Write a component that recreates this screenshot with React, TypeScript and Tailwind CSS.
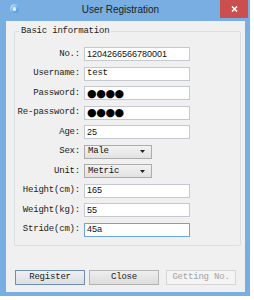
import React from 'react';

const mono = { fontFamily: '"Liberation Mono", "DejaVu Sans Mono", monospace' };

const rows: { label: string; value: string; kind: 'text' | 'mono' | 'pass' | 'select' | 'focus' }[] = [
  { label: 'No.:', value: '1204266566780001', kind: 'text' },
  { label: 'Username:', value: 'test', kind: 'mono' },
  { label: 'Password:', value: '●●●●', kind: 'pass' },
  { label: 'Re-password:', value: '●●●●', kind: 'pass' },
  { label: 'Age:', value: '25', kind: 'text' },
  { label: 'Sex:', value: 'Male', kind: 'select' },
  { label: 'Unit:', value: 'Metric', kind: 'select' },
  { label: 'Height(cm):', value: '165', kind: 'text' },
  { label: 'Weight(kg):', value: '55', kind: 'text' },
  { label: 'Stride(cm):', value: '45a', kind: 'focus' },
];

const Field = ({ value, kind }: { value: string; kind: string }) => {
  if (kind === 'select') {
    return (
      <div className="w-[68px] h-[14px] flex items-center justify-between border border-[#acacac] bg-gradient-to-b from-[#f2f2f2] to-[#e2e2e2] pl-[3px] pr-[6px]">
        <span className="text-[9px] leading-none tracking-[-0.2px] text-[#111]" style={mono}>{value}</span>
        <svg width="5" height="3" viewBox="0 0 5 3"><path d="M0 0h5L2.5 3z" fill="#222" /></svg>
      </div>
    );
  }
  const border = kind === 'focus' ? 'border-[#6aa5dc]' : 'border-[#c5c9cf]';
  return (
    <div className={`w-[106px] h-[14px] flex items-center border ${border} bg-white pl-[2px]`}>
      {kind === 'pass' ? (
        <span className="text-[11px] leading-none tracking-[-0.4px] text-black" style={{ fontFamily: '"DejaVu Sans", sans-serif' }}>{value}</span>
      ) : kind === 'mono' ? (
        <span className="text-[9px] leading-none tracking-[-0.2px] text-[#111]" style={mono}>{value}</span>
      ) : (
        <span className="text-[9px] leading-none text-[#111]" style={{ fontFamily: '"Liberation Sans", Arial, sans-serif' }}>{value}</span>
      )}
    </div>
  );
};

export default function App() {
  return (
    <div className="w-[254px] h-[300px] bg-white">
      <div className="w-[250px] h-[296px] bg-[#78aee1] flex flex-col">
        <div className="h-[21px] flex items-start">
          <div className="ml-[10px] mt-[4px] w-[9px] h-[9px] rounded-full bg-gradient-to-br from-[#bfe4ff] to-[#3b8fd6] flex items-center justify-center">
            <div className="w-[3px] h-[4px] bg-white/80 rounded-sm" />
          </div>
          <div className="flex-1 pl-[2px] pt-[4px] text-center text-[10px] leading-[12px] text-[#222]" style={{ fontFamily: '"Liberation Sans", Arial, sans-serif' }}>
            User Registration
          </div>
          <div className="w-[28px] h-[18px] mr-[2px] bg-[#c9504f] flex items-center justify-center">
            <svg width="7" height="6" viewBox="0 0 7 6"><path d="M1 0.5L6 5.5M6 0.5L1 5.5" stroke="#fff" strokeWidth="1.6" /></svg>
          </div>
        </div>
        <div className="ml-[6px] mr-[5px] h-[271px] bg-[#f0f0f0] flex flex-col" style={mono}>
          <div className="relative mt-[10px] ml-[8px] w-[227px] h-[215px] border border-[#dadfe3] rounded-[2px] pt-[15px]">
            <span className="absolute left-[4px] top-[-6px] px-[2px] bg-[#f0f0f0] text-[9px] leading-[11px] tracking-[-0.2px] text-[#222]">Basic information</span>
            <div className="flex flex-col gap-[5.5px]">
              {rows.map((r) => (
                <div key={r.label} className="h-[14px] flex items-center">
                  <div className="w-[65px] text-right text-[9px] leading-none tracking-[-0.2px] text-[#222] whitespace-nowrap">{r.label}</div>
                  <div className="ml-[4px]">
                    <Field value={r.value} kind={r.kind} />
                  </div>
                </div>
              ))}
            </div>
          </div>
          <div className="mt-[24px] ml-[9px] flex">
            <div className="w-[70px] h-[15px] border border-[#6d8fb3] bg-gradient-to-b from-[#eef0f2] to-[#dcdfe3] flex items-center justify-center text-[9px] leading-none tracking-[-0.2px] text-[#222]">Register</div>
            <div className="ml-[4px] w-[70px] h-[15px] border border-[#b3b3b3] bg-gradient-to-b from-[#eeeeee] to-[#dddddd] flex items-center justify-center text-[9px] leading-none tracking-[-0.2px] text-[#222]">Close</div>
            <div className="ml-[7px] w-[70px] h-[15px] border border-[#d6d6d6] bg-[#f4f4f4] flex items-center justify-center text-[9px] leading-none tracking-[-0.2px] text-[#a3a3a3]">Getting No.</div>
          </div>
        </div>
      </div>
    </div>
  );
}
